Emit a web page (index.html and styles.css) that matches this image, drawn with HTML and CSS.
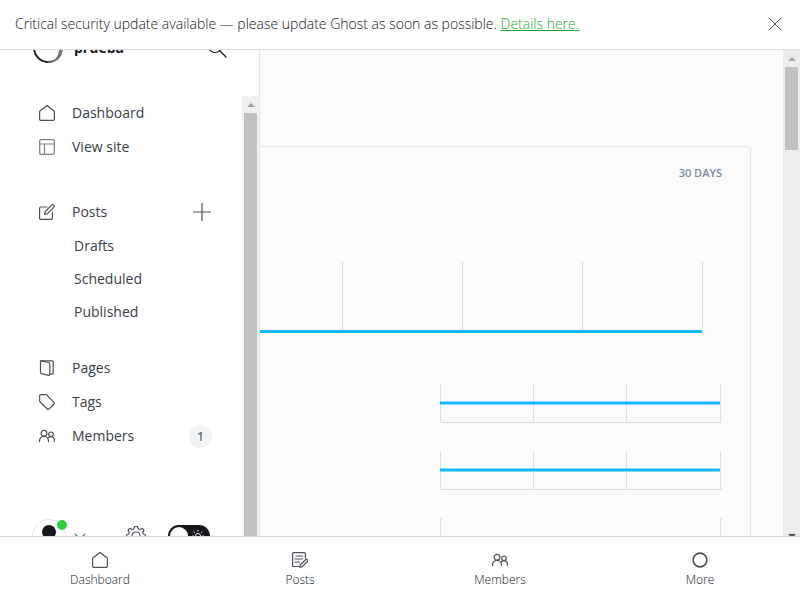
FILE: index.html
```html
<!DOCTYPE html>
<html lang="en">
<head>
<meta charset="utf-8">
<meta name="viewport" content="width=device-width, initial-scale=1">
<title>Dashboard - prueba</title>
<link rel="stylesheet" href="styles.css">
</head>
<body>
<svg class="sprite" aria-hidden="true">
  <symbol id="home" viewBox="0 0 16 16"><path d="M.6 6.200 8 .6l7.400 5.600v7.800a1.300 1.300 0 0 1-1.300 1.300H1.900A1.300 1.300 0 0 1 .6 14z"/></symbol>
  <symbol id="members" viewBox="0 0 16 16"><circle cx="5" cy="5.200" r="2.900"/><path d="M.5 13.500c0-3.200 2-5 4.500-5s4.500 1.800 4.500 5"/><circle cx="12" cy="6.300" r="2.300"/><path d="M9.600 9.700c.7-.7 1.500-1 2.400-1 2.100 0 3.500 1.500 3.500 4.500"/></symbol>
</svg>

<header class="alert">
  <p class="alert-text">Critical security update available — please update Ghost as soon as possible. <a href="#details">Details here.</a></p>
  <button class="icon-button close" type="button" aria-label="Close">
    <svg class="icon thin" viewBox="0 0 16 16"><path d="m2 2 12 12M14 2 2 14"/></svg>
  </button>
</header>

<div class="app">
  <aside class="sidebar">
    <div class="site">
      <svg class="logo" viewBox="0 0 32 32"><circle cx="16" cy="16" r="14" fill="none" stroke="#555" stroke-width="1.800"/><path d="M30.500 16c.6 7-4.500 15-14 15 6-1.500 9.500-5 11-15z" fill="#777"/><path d="M2 17c1 7 6 13 14 13" fill="none" stroke="#222" stroke-width="1.500"/></svg>
      <strong class="site-name">prueba</strong>
      <button class="icon-button search" type="button" aria-label="Search">
        <svg class="icon large dark" viewBox="0 0 20 20"><circle cx="8" cy="8" r="6.500"/><path d="m13 13 6 6"/></svg>
      </button>
    </div>
    <div class="sidebar-body">
      <nav class="menu" aria-label="Main">
        <ul class="group">
          <li class="row"><a href="#dashboard"><svg class="icon"><use href="#home"/></svg>Dashboard</a></li>
          <li class="row"><a href="#site"><svg class="icon soft" viewBox="0 0 16 16"><rect x=".7" y=".7" width="14.600" height="14.600" rx="1"/><path d="M.7 5h14.600M5.500 5v10.300"/></svg>View site</a></li>
        </ul>
        <ul class="group posts">
          <li class="row">
            <a href="#posts"><svg class="icon" viewBox="0 0 16 16"><path d="M8 3H1.800A1.200 1.200 0 0 0 .6 4.200v10a1.200 1.200 0 0 0 1.200 1.200h10.400a1.200 1.200 0 0 0 1.200-1.200V8"/><path d="m5.500 10.500.8-3L12.600 1.200a1.550 1.550 0 0 1 2.200 2.200L8.500 9.700z"/></svg>Posts</a>
            <button class="icon-button" type="button" aria-label="New post"><svg class="icon large" viewBox="0 0 20 20"><path d="M10 1.500v17M1.500 10h17"/></svg></button>
          </li>
          <li class="subrow"><a href="#drafts">Drafts</a></li>
          <li class="subrow"><a href="#scheduled">Scheduled</a></li>
          <li class="subrow"><a href="#published">Published</a></li>
        </ul>
        <ul class="group">
          <li class="row"><a href="#pages"><svg class="icon" viewBox="0 0 16 16"><path d="M2 .8h11.200a1 1 0 0 1 1 1v11.400a1 1 0 0 1-1 1H11"/><path d="m2.300.8 7.300 1.700c.8.200 1.200.7 1.200 1.400v10.400c0 .8-.6 1.200-1.300 1L2.600 13.600c-.7-.2-1.100-.7-1.100-1.300V1.600c0-.6.3-.9.800-.8z"/></svg>Pages</a></li>
          <li class="row"><a href="#tags"><svg class="icon" viewBox="0 0 16 16"><path d="M.7 1.700a1 1 0 0 1 1-1h5.100c.5 0 .9.200 1.200.5l7 7.100c.5.500.5 1.200 0 1.700L10 15c-.5.500-1.200.5-1.700 0L1.200 8A1.500 1.500 0 0 1 .7 6.800z"/></svg>Tags</a></li>
          <li class="row"><a href="#members-list"><svg class="icon"><use href="#members"/></svg>Members</a><span class="count">1</span></li>
        </ul>
        <div class="account">
          <button class="icon-button user" type="button" aria-label="Account">
            <svg class="avatar" viewBox="0 0 34 34"><circle cx="17" cy="17" r="16.500" fill="#fff" stroke="#e5e7ea"/><circle cx="17" cy="13" r="7" fill="#15171a"/><path d="M5 28c3-8 21-8 24 0-6 7-18 7-24 0z" fill="#15171a"/></svg>
            <span class="dot"></span>
            <svg class="chevron" viewBox="0 0 12 8"><path d="m1 2 5 5 5-5"/></svg>
          </button>
          <button class="icon-button gear" type="button" aria-label="Settings">
            <svg class="icon large" viewBox="0 0 20 20"><path d="M8.400 1.300c.5-1.700 2.700-1.700 3.200 0l.3.900c.3 1 1.400 1.500 2.400 1l.8-.4c1.600-.8 3.200.8 2.400 2.300l-.5.900c-.5.900 0 2 1 2.300l.6.300c1.700.5 1.700 2.700 0 3.200l-.6.200c-1 .3-1.500 1.400-1 2.400l.4.800c.8 1.500-.8 3.100-2.300 2.300l-.8-.4c-1-.5-2.100 0-2.400 1l-.3.900c-.5 1.700-2.700 1.700-3.200 0l-.3-.9c-.3-1-1.400-1.500-2.400-1l-.8.400c-1.500.8-3.100-.8-2.300-2.300l.4-.8c.5-1 0-2.100-1-2.400l-.6-.2c-1.700-.5-1.700-2.700 0-3.200L2 8.300c1-.3 1.500-1.400 1-2.300l-.5-.9c-.8-1.500.8-3.100 2.400-2.300l.8.400c1 .5 2.100 0 2.400-1z"/><circle cx="10" cy="10" r="4"/></svg>
          </button>
          <button class="toggle" type="button" role="switch" aria-checked="false" aria-label="Night shift">
            <span class="knob"></span>
            <svg class="sun" viewBox="0 0 14 14"><circle cx="7" cy="7" r="2.500"/><path d="M7 1v1.500M7 11.500V13M1 7h1.500M11.500 7H13M2.700 2.700l1.100 1.100M10.200 10.200l1.100 1.100M11.300 2.700l-1.100 1.100M3.800 10.200l-1.100 1.100"/></svg>
          </button>
        </div>
      </nav>
      <div class="scrollbar" aria-hidden="true"><span class="arrow up"></span><span class="thumb full"></span></div>
    </div>
  </aside>

  <main class="content">
    <section class="card">
      <h2 class="range">30 days</h2>
      <svg class="chart-large" viewBox="0 0 443 72" aria-label="Total members">
        <path class="grid" d="M82.500 0v69M202.500 0v69M322.500 0v69M442.500 0v69"/>
        <path class="line" d="M0 69.500h442"/>
      </svg>
      <svg class="chart-small" viewBox="0 0 281 39" aria-label="Paid members">
        <path class="grid" d="M.5 0v38.500h280V0M93.500 0v38M186.500 0v38"/>
        <path class="line" d="M0 19h280"/>
      </svg>
      <svg class="chart-small" viewBox="0 0 281 39" aria-label="Recurring revenue">
        <path class="grid" d="M.5 0v38.500h280V0M93.500 0v38M186.500 0v38"/>
        <path class="line" d="M0 19h280"/>
      </svg>
      <svg class="chart-small" viewBox="0 0 281 39" aria-label="Open rate">
        <path class="grid" d="M.5 0v38.500h280V0"/>
      </svg>
    </section>
  </main>
  <div class="scrollbar page-scrollbar" aria-hidden="true"><span class="arrow up"></span><span class="thumb"></span><span class="arrow down"></span></div>
</div>

<nav class="tabs" aria-label="Mobile">
  <a href="#dashboard"><svg class="icon"><use href="#home"/></svg>Dashboard</a>
  <a href="#posts"><svg class="icon" viewBox="0 0 16 16"><path d="M6.500 14.500H1.600a1 1 0 0 1-1-1V1.600a1 1 0 0 1 1-1h10.800a1 1 0 0 1 1 1V6M4 4h6.500M3 7h7.500M3 10h4.500"/><path d="m8.300 12.800 5.200-5.100a1.200 1.200 0 0 1 1.800 1.800L10.200 14.700l-2.500.6z"/></svg>Posts</a>
  <a href="#members-list"><svg class="icon"><use href="#members"/></svg>Members</a>
  <a href="#more"><svg class="icon ring" viewBox="0 0 16 16"><circle cx="8" cy="8" r="6.900"/></svg>More</a>
</nav>
</body>
</html>
```
FILE: styles.css
```css
* { box-sizing: border-box; }

body {
  display: flex;
  flex-direction: column;
  height: 100vh;
  margin: 0;
  overflow: hidden;
  background: #fff;
  color: #394047;
  font-family: "Open Sans", "Noto Sans", sans-serif;
  font-size: 14px;
}

a { color: inherit; text-decoration: none; }
ul { margin: 0; padding: 0; list-style: none; }

.sprite { position: absolute; width: 0; height: 0; }

.icon {
  flex: none;
  width: 16px;
  height: 16px;
  fill: none;
  stroke: #4a5158;
  stroke-width: 1.2;
  stroke-linecap: round;
  stroke-linejoin: round;
}
.icon.large { width: 20px; height: 20px; }
.icon.thin { stroke-width: 1; }
.icon.soft { stroke: #7c8085; }
.icon.dark { stroke: #15171a; }
.icon.ring { stroke-width: 1.6; }

.icon-button {
  display: flex;
  align-items: center;
  padding: 0;
  border: 0;
  background: none;
}

/* Alert bar */
.alert {
  display: flex;
  flex: none;
  align-items: center;
  justify-content: space-between;
  height: 50px;
  padding: 0 17px 2px 15px;
  border-bottom: 1px solid #dddfe1;
}
.alert-text { margin: 0; color: #15171a; font-weight: 300; }
.alert-text a { color: #1fa832; text-decoration: underline; }

.app { display: flex; flex: 1; min-height: 0; overflow: hidden; }

/* Sidebar */
.sidebar {
  display: flex;
  flex: none;
  flex-direction: column;
  width: 260px;
  overflow: hidden;
  border-right: 1px solid #e3e5e8;
}
.site {
  display: flex;
  flex: none;
  align-items: flex-start;
  height: 64px;
  margin-top: -18px;
  padding: 0 32px 0 32px;
}
.logo { width: 32px; height: 32px; margin-right: 10px; }
.site-name { color: #15171a; font-size: 14px; font-weight: 700; line-height: 32px; }
.search { margin-left: auto; padding-top: 6px; }

.sidebar-body { display: flex; flex: 1; min-height: 0; }
.menu { flex: 1; padding: 0 30px 0 39px; }
.group { margin-bottom: 31px; }
.group.posts { margin-bottom: 23px; }
.row { display: flex; align-items: center; justify-content: space-between; height: 34px; }
.row a { display: flex; align-items: center; gap: 17px; line-height: 18px; }
.subrow { height: 33px; padding-left: 35px; line-height: 33px; }
.count {
  width: 23px;
  height: 23px;
  border-radius: 50%;
  background: #f1f3f4;
  color: #626d79;
  font-size: 12px;
  font-weight: 600;
  line-height: 23px;
  text-align: center;
}

.account {
  display: flex;
  align-items: center;
  justify-content: space-between;
  margin: 66px 2px 0 -7px;
}
.user { position: relative; gap: 8px; }
.avatar { width: 34px; height: 34px; }
.dot {
  position: absolute;
  top: 1px;
  left: 25px;
  width: 10px;
  height: 10px;
  border-radius: 50%;
  background: #30cf43;
}
.chevron { width: 12px; height: 8px; fill: none; stroke: #626d79; stroke-width: 1.2; }
.gear { margin-left: 18px; }
.toggle {
  display: flex;
  align-items: center;
  justify-content: space-between;
  width: 42px;
  height: 22px;
  padding: 0 5px 0 2px;
  border: 0;
  border-radius: 11px;
  background: #15171a;
}
.knob { width: 18px; height: 18px; border-radius: 50%; background: #fff; }
.sun { width: 14px; height: 14px; fill: none; stroke: #fff; }

/* Scrollbars */
.scrollbar {
  display: flex;
  flex: none;
  flex-direction: column;
  align-items: center;
  width: 17px;
  background: #f1f1f1;
}
.arrow { display: grid; flex: none; place-items: center; width: 17px; height: 17px; }
.arrow::before { content: ""; border: 4px solid transparent; border-top: 0; border-bottom-color: #a3a3a3; }
.arrow.down::before { border-top: 4px solid #505050; border-bottom: 0; }
.arrow.down { margin-top: auto; }
.thumb { flex: none; width: 13px; height: 83px; background: #c1c1c1; }
.thumb.full { flex: 1; }
.page-scrollbar { margin-bottom: -8px; background: #ececec; }

/* Dashboard */
.content { flex: 1; min-width: 0; padding: 96px 32px 0 0; overflow: hidden; background: #fbfbfb; }
.card {
  display: flex;
  flex-direction: column;
  align-items: flex-end;
  min-height: 480px;
  padding: 18px 28px 0 0;
  border: 1px solid #e5e7e9;
  border-left: 0;
  border-top-right-radius: 3px;
}
.range {
  margin: 0;
  color: #7c8b9a;
  font-size: 11px;
  font-weight: 600;
  line-height: 16px;
  text-transform: uppercase;
}
.chart-large { flex: none; width: 443px; height: 72px; margin: 81px 19px 50px 0; }
.chart-small { flex: none; width: 281px; height: 39px; margin: 0 1px 28px 0; }
.grid { fill: none; stroke: #dddfe3; }
.line { stroke: #14b8ff; stroke-width: 3; }

/* Bottom tabs */
.tabs {
  display: grid;
  flex: none;
  grid-template-columns: repeat(4, 1fr);
  height: 64px;
  border-top: 1px solid #ced4d9;
  background: #fff;
  color: #15171a;
  font-size: 12px;
  font-weight: 300;
}
.tabs a {
  display: flex;
  flex-direction: column;
  align-items: center;
  gap: 4px;
  padding-top: 15px;
  line-height: 16px;
}
```
